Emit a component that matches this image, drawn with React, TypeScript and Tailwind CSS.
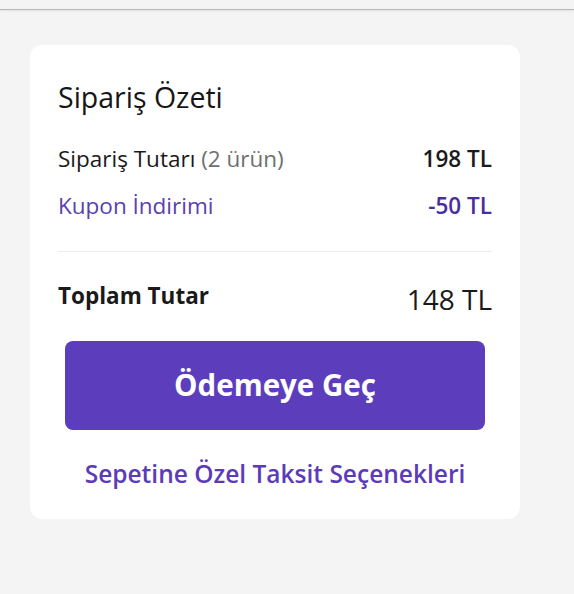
export default function App() {
  return (
    <div
      className="min-h-[594px] bg-[#f4f4f4] text-[#1a1a1a]"
      style={{ fontFamily: '"Open Sans", "Noto Sans", sans-serif' }}
    >
      <div className="h-[9px]" />
      <div className="h-px bg-[#b9b9b9] shadow-[0_1px_2px_rgba(0,0,0,0.12)]" />
      <div className="pl-[30px] pt-[35px]">
        <div className="w-[490px] rounded-[12px] bg-white px-[28px] pt-[34px] pb-[29px]">
          <h2 className="text-[28.5px] leading-[36px] font-normal text-[#161616]">Sipariş Özeti</h2>

          <div className="mt-[29px] flex items-start justify-between text-[22.5px] leading-[30px]">
            <span>
              Sipariş Tutarı <span className="text-[#6f6f6f]">(2 ürün)</span>
            </span>
            <span className="font-semibold">198 TL</span>
          </div>
          <div className="mt-[17px] flex items-start justify-between text-[22.5px] leading-[30px] text-[#5a40b0]">
            <span>Kupon İndirimi</span>
            <span className="font-semibold text-[#4a2f9c]">-50 TL</span>
          </div>

          <div className="mt-[30px] h-px bg-[#eeeeee]" />

          <div className="mt-[29px] flex items-start justify-between">
            <span className="text-[22.5px] font-bold leading-[30px]">Toplam Tutar</span>
            <span className="text-[28px] leading-[36px]">148 TL</span>
          </div>

          <button className="mx-[7px] mt-[24px] flex h-[89px] w-[420px] items-center justify-center rounded-[8px] bg-[#5c3ebc] text-[29.5px] font-bold text-white">
            Ödemeye Geç
          </button>

          <div className="mt-[28px] text-center text-[24.5px] leading-[32px] font-semibold text-[#5b3bba]">
            Sepetine Özel Taksit Seçenekleri
          </div>
        </div>
      </div>
    </div>
  );
}
